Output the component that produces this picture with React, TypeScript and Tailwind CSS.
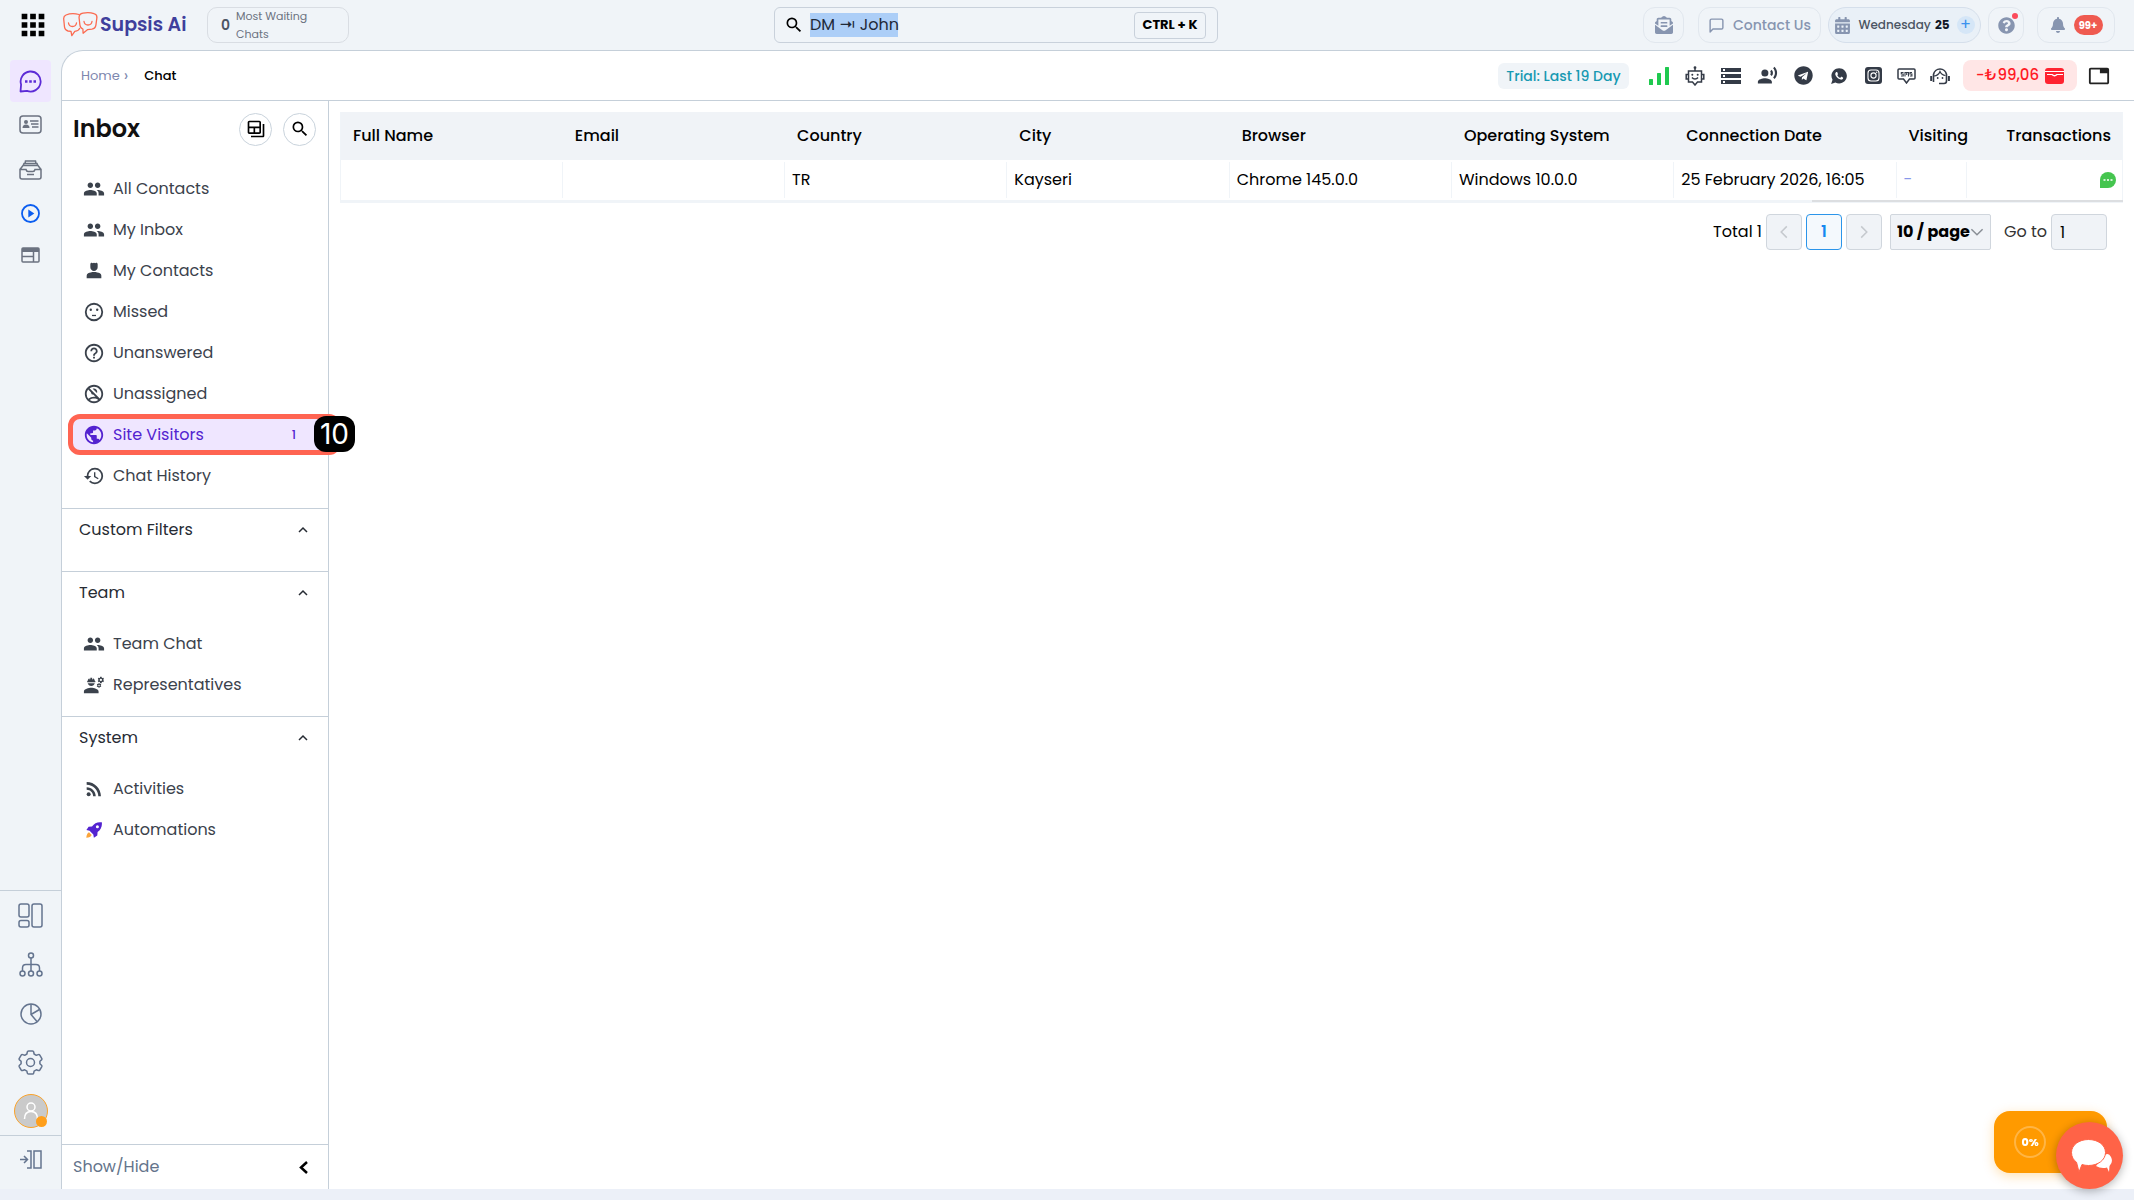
import { FaBell, FaCalendarAlt, FaEnvelopeOpenText, FaQuestionCircle, FaTelegram } from "react-icons/fa"
import { FiMessageSquare } from "react-icons/fi"
import { IoLogoWhatsapp } from "react-icons/io"
import {
  MdApps,
  MdEngineering,
  MdGroup,
  MdHelpOutline,
  MdHistory,
  MdOutlineBackupTable,
  MdOutlineNoAccounts,
  MdPerson4,
  MdPublic,
  MdRecordVoiceOver,
  MdRssFeed,
  MdSearch,
  MdStorage,
  MdTab,
} from "react-icons/md"

const INBOX = [
  { name: "All Contacts", icon: <MdGroup size={22} /> },
  { name: "My Inbox", icon: <MdGroup size={22} /> },
  { name: "My Contacts", icon: <MdPerson4 size={22} /> },
  { name: "Missed", icon: <MissedIcon /> },
  { name: "Unanswered", icon: <MdHelpOutline size={22} /> },
  { name: "Unassigned", icon: <MdOutlineNoAccounts size={22} /> },
  { name: "Site Visitors", icon: <MdPublic size={22} />, count: 1, active: true },
  { name: "Chat History", icon: <MdHistory size={22} /> },
]

const SECTIONS = [
  { title: "Custom Filters", items: [] },
  {
    title: "Team",
    items: [
      { name: "Team Chat", icon: <MdGroup size={22} /> },
      { name: "Representatives", icon: <MdEngineering size={22} /> },
    ],
  },
  {
    title: "System",
    items: [
      { name: "Activities", icon: <MdRssFeed size={22} /> },
      { name: "Automations", icon: <RocketIcon /> },
    ],
  },
]

const COLUMNS = ["Full Name", "Email", "Country", "City", "Browser", "Operating System", "Connection Date"]
const VISITOR = ["", "", "TR", "Kayseri", "Chrome 145.0.0", "Windows 10.0.0", "25 February 2026, 16:05"]

const CHANNELS = [
  { name: "Signal", icon: <SignalIcon />, width: "w-9" },
  { name: "Bot", icon: <BotIcon />, width: "w-9" },
  { name: "Queue", icon: <MdStorage size={24} />, width: "w-9" },
  { name: "Voice", icon: <MdRecordVoiceOver size={21} />, width: "w-9" },
  { name: "Telegram", icon: <FaTelegram size={19} />, width: "w-9" },
  { name: "WhatsApp", icon: <IoLogoWhatsapp size={18} />, width: "w-9" },
  { name: "Instagram", icon: <InstagramIcon />, width: "w-[33px]" },
  { name: "SMS", icon: <SmsIcon />, width: "w-[33px]" },
  { name: "Support", icon: <SupportIcon />, width: "w-[33px]" },
]

function MissedIcon() {
  return (
    <svg width="22" height="22" viewBox="0 0 24 24" fill="none" stroke="currentColor" strokeWidth="2">
      <circle cx="12" cy="12" r="9" />
      <path d="M9.8 15.8h4.4" strokeWidth="1.4" />
      <circle cx="8.5" cy="9.5" r="1.3" fill="currentColor" stroke="none" />
      <circle cx="15.5" cy="9.5" r="1.3" fill="currentColor" stroke="none" />
    </svg>
  )
}

function RocketIcon() {
  return (
    <svg width="16" height="16" viewBox="0 0 16 16">
      <path d="M15.8.3C11.6-.4 8.4 1.2 6 4.400L2.600 4.700.4 8.100l3.200.6 3.700 3.700.6 3.400 3.400-2.300.3-3.500C14.800 7.600 16.400 4.400 15.800.3Z" fill="#5323d0" />
      <circle cx="11.4" cy="4.7" r="1.5" fill="#fff" />
      <path d="M3 10.200c-1.600.5-2.500 2.700-2.700 5.500 2.800-.2 4.900-1 5.400-2.700Z" fill="#fba53b" />
    </svg>
  )
}

function SignalIcon() {
  return (
    <svg width="20" height="18" viewBox="0 0 20 18" fill="#1fc94f">
      <rect y="12" width="4" height="6" rx=".5" />
      <rect x="8" y="6" width="4" height="12" rx=".5" />
      <rect x="16" width="4" height="18" rx=".5" />
    </svg>
  )
}

function BotIcon() {
  return (
    <svg width="20" height="20" viewBox="0 0 20 20" fill="none" stroke="currentColor" strokeWidth="1.5">
      <path d="M10 5V2.500M3.500 5h13v11h-4L10 19l-2.500-3h-4ZM3.500 8.500H1.200V13h2.300M16.500 8.500h2.300V13h-2.300M7 11.500c1.500 2 4.500 2 6 0" />
      <circle cx="10" cy="1.7" r="1.4" fill="currentColor" stroke="none" />
      <circle cx="7.3" cy="8.7" r="1" fill="currentColor" stroke="none" />
      <circle cx="12.7" cy="8.7" r="1" fill="currentColor" stroke="none" />
    </svg>
  )
}

function InstagramIcon() {
  return (
    <svg width="17" height="17" viewBox="0 0 17 17">
      <rect width="17" height="17" rx="3" fill="currentColor" />
      <rect x="3" y="3" width="11" height="11" rx="3" fill="none" stroke="#fff" strokeWidth="1.1" />
      <circle cx="8.5" cy="8.5" r="2.6" fill="none" stroke="#fff" strokeWidth="1.1" />
      <circle cx="11.7" cy="5.3" r=".7" fill="#fff" />
    </svg>
  )
}

function SmsIcon() {
  return (
    <svg width="19" height="16" viewBox="0 0 19 16" fill="none" stroke="currentColor" strokeWidth="1.5">
      <path d="M2 1h15q1 0 1 1v8q0 1-1 1h-4.500L9.500 15l-3-4H2q-1 0-1-1V2q0-1 1-1Z" />
      <path d="M6.500 4.500H4.300v1.500h1.900v2H4M8 8.500v-4h3.500v4M9.700 4.500V7M15 4.500h-2v1.500h1.900v2H13" strokeWidth="1.1" />
    </svg>
  )
}

function SupportIcon() {
  return (
    <svg width="20" height="19" viewBox="0 0 20 19" fill="none" stroke="currentColor" strokeWidth="1.6">
      <path d="M3.500 16V8.500a6.600 6.600 0 0 1 13 0V15q0 2.500-2.500 2.500H9" />
      <path d="M1.200 10v5M18.900 10v5" strokeWidth="2" />
      <path d="M4 10q4.500-.5 6-4.500 1.500 3.500 5.500 4" strokeWidth="1.2" />
      <circle cx="7.7" cy="12" r=".9" fill="currentColor" stroke="none" />
      <circle cx="12.5" cy="12" r=".9" fill="currentColor" stroke="none" />
    </svg>
  )
}

function Logo() {
  return (
    <svg width="35" height="26" viewBox="0 0 35 26" fill="none" stroke="#fb6a50" strokeWidth="1.3" strokeLinejoin="round" strokeLinecap="round">
      <path d="M16 2.500Q9 .5 3 3q-2.500 1-2.300 4l.8 8q.5 3.500 3.500 4l3 .4.800 4.200 3-4.200q4-.5 4.800-3" />
      <path d="M20 1.200q6-1.200 11 .5 3.200 1 2.900 4l-1 7.500q-.5 3.500-4 4l-4.500.5-4.300 3.500-.2-4.200q-2.500-.8-3-4l-.8-7Q15.700 2 20 1.200Z" />
      <path d="M5.500 11q.5 3.500 4 3.500t4-3.500M21 9.500q.5 3.500 4 3.500t4-3.500" />
    </svg>
  )
}

function ChatIcon() {
  return (
    <svg width="23" height="23" viewBox="0 0 23 23" fill="none" stroke="currentColor" strokeWidth="1.8" strokeLinejoin="round">
      <path d="M1.500 21.500l.6-7A10 10 0 1 1 8 20.800Z" />
      <path d="M6 11.500h2.500M10.200 11.500h2.600M14.500 11.500H17" strokeWidth="2.4" />
    </svg>
  )
}

function ContactCardIcon() {
  return (
    <svg width="23" height="19" viewBox="0 0 23 19" fill="none" stroke="currentColor" strokeWidth="1.5">
      <rect x="1" y="1" width="21" height="17" rx="3" />
      <circle cx="7" cy="7" r="2" fill="currentColor" stroke="none" />
      <path d="M3.500 13q0-3.500 3.500-3.500t3.500 3.500Z" fill="currentColor" stroke="none" />
      <path d="M11 6h8.500M12 9h7.500M13 12h6.500" />
    </svg>
  )
}

function ArchiveIcon() {
  return (
    <svg width="23" height="20" viewBox="0 0 23 20" fill="none" stroke="currentColor" strokeWidth="1.5">
      <path d="M1 9.500 4 5.500h15l3 4M4 6l1-2.500h13L19 6M6 3.500 6.500 1h10l.5 2.500M1 9.500h6q.5 2 2 2h5q1.500 0 2-2h6V17q0 2-2 2H3q-2 0-2-2ZM8 14.500h7" />
    </svg>
  )
}

function PlayIcon() {
  return (
    <svg width="19" height="19" viewBox="0 0 19 19">
      <circle cx="9.5" cy="9.5" r="8.5" fill="none" stroke="currentColor" strokeWidth="1.8" />
      <path d="m7.300 5.500 6 4-6 4Z" fill="currentColor" />
    </svg>
  )
}

function LayoutIcon() {
  return (
    <svg width="19" height="16" viewBox="0 0 19 16" fill="none" stroke="currentColor" strokeWidth="1.5">
      <rect x="1" y="1" width="17" height="14" rx="1" />
      <path d="M1 3h17" strokeWidth="4" />
      <path d="M1 9.500h11M12.500 5v10" />
    </svg>
  )
}

function PanelsIcon() {
  return (
    <svg width="25" height="25" viewBox="0 0 25 25" fill="none" stroke="currentColor" strokeWidth="1.5">
      <rect x="1" y="1" width="10" height="13" rx="2" />
      <rect x="1" y="17.5" width="10" height="6.5" rx="2" />
      <rect x="14" y="1" width="10" height="23" rx="2" />
    </svg>
  )
}

function TreeIcon() {
  return (
    <svg width="24" height="25" viewBox="0 0 24 25" fill="none" stroke="currentColor" strokeWidth="1.5">
      <circle cx="12" cy="3.5" r="2.5" />
      <circle cx="3.5" cy="21.5" r="2.5" />
      <circle cx="12" cy="21.5" r="2.5" />
      <circle cx="20.5" cy="21.5" r="2.5" />
      <path d="M12 6v13M3.500 19v-3q0-3.500 3.500-3.500h10q3.500 0 3.500 3.500v3" />
    </svg>
  )
}

function PieIcon() {
  return (
    <svg width="22" height="22" viewBox="0 0 22 22" fill="none" stroke="currentColor" strokeWidth="1.5">
      <circle cx="11" cy="11" r="10" />
      <path d="M11 1v10.500l6 7M11 11.500l8.500-5" />
    </svg>
  )
}

function GearIcon() {
  return (
    <svg width="25" height="25" viewBox="0 0 25 25" fill="none" stroke="currentColor" strokeWidth="1.5" strokeLinejoin="round">
      <path d="M10.500 1h4q1 0 1.200 1l.4 2 2.200 1.300 2-.7q1-.3 1.500.5l1.900 3.200q.5.900-.2 1.600l-1.600 1.400v2.500l1.600 1.400q.7.700.2 1.600l-1.900 3.200q-.5.800-1.500.5l-2-.7-2.200 1.300-.4 2q-.2.900-1.200.9h-4q-1 0-1.200-.9l-.4-2-2.200-1.300-2 .7q-1 .3-1.500-.5l-1.900-3.200q-.5-.9.2-1.600l1.600-1.400v-2.500L1.500 9.900q-.7-.7-.2-1.600l1.900-3.200q.5-.8 1.500-.5l2 .7L8.900 4l.4-2q.2-1 1.200-1Z" />
      <circle cx="12.5" cy="12.5" r="4" />
    </svg>
  )
}

function ExpandIcon() {
  return (
    <svg width="22" height="19" viewBox="0 0 22 19" fill="none" stroke="currentColor" strokeWidth="1.5">
      <path d="M0 9.500h7M4 6l3.500 3.500L4 13M7 1h4v17H7" />
      <rect x="14" y="1" width="7" height="17" />
    </svg>
  )
}

function Chevron({ dir, size = 10 }: { dir: "up" | "left" | "right" | "down"; size?: number }) {
  const paths = { up: "m1 7 4-4 4 4", down: "m1 3 4 4 4-4", left: "M7 1 3 5l4 4", right: "m3 1 4 4-4 4" }
  return (
    <svg width={size} height={size} viewBox="0 0 10 10" fill="none" stroke="currentColor" strokeWidth={15 / size}>
      <path d={paths[dir]} />
    </svg>
  )
}

type Item = { name: string; icon: React.ReactNode; count?: number; active?: boolean }

function NavItem({ item }: { item: Item }) {
  return (
    <li className="relative">
      <a
        href="#"
        className={`flex h-[41px] items-center pl-[21px] pr-[26px] ${item.active ? "text-[#5323d0]" : "text-[#3b424c]"}`}
      >
        {/* Callout around the selected row */}
        {item.active && (
          <span className="absolute inset-y-0 left-[6px] -right-[13px] rounded-xl border-[5px] border-[#ff6452] bg-[#efe6ff]" />
        )}
        <span className="relative flex w-[22px] shrink-0 justify-center">{item.icon}</span>
        <span className="relative ml-2 flex-1">{item.name}</span>
        {item.count && <span className="relative mr-[6px] text-xs font-medium">{item.count}</span>}
      </a>
      {item.active && (
        <span className="absolute top-[2px] -right-[27px] z-10 flex h-9 w-[41px] items-center justify-center rounded-xl bg-black font-['Inter',sans-serif] text-[28px] text-white">
          10
        </span>
      )}
    </li>
  )
}

function Header() {
  return (
    <header className="flex h-[50px] shrink-0 items-center justify-between">
      <div className="flex items-center">
        <button aria-label="Apps" className="ml-4 text-black">
          <MdApps size={34} />
        </button>
        <a href="#" className="ml-[13px] flex w-[132px] items-center gap-[2px] text-[19px] font-semibold text-[#3f3f9c]">
          <Logo />
          Supsis Ai
        </a>
        <div className="ml-3 flex h-9 w-[142px] items-center gap-[6px] rounded-[10px] border border-[#d9dde3] pl-[13px]">
          <strong className="text-sm font-semibold text-[#4b5563]">0</strong>
          <span className="w-20 text-[11px] leading-[18px] text-[#6b7280]">Most Waiting Chats</span>
        </div>
      </div>

      <div className="flex h-9 w-[444px] items-center rounded-md border border-[#c9d1db] pl-[9px] pr-[11px]">
        <MdSearch size={20} className="text-black" />
        <div className="relative ml-[6px] flex-1">
          <span className="absolute top-0 left-0 h-6 w-[88px] bg-[#accef7]" />
          <input
            aria-label="Search"
            defaultValue="DM ⇥ John"
            className="relative block h-6 w-full bg-transparent text-[#1f2937] outline-none"
          />
        </div>
        <kbd className="flex h-[27px] w-[72px] items-center justify-center rounded border border-[#c9d1db] font-['Poppins','Inter',sans-serif] text-[13px] font-bold text-black">
          CTRL + K
        </kbd>
      </div>

      <div className="flex items-center pr-[19px] text-[#8795b0]">
        <button aria-label="Mail" className="flex h-9 w-[41px] items-center justify-center rounded-xl border border-[#e1e7ee]">
          <FaEnvelopeOpenText size={18} />
        </button>
        <button className="ml-[14px] flex h-9 w-[123px] items-center justify-center gap-2 rounded-xl border border-[#e1e7ee] text-sm font-medium">
          <FiMessageSquare size={17} />
          Contact Us
        </button>
        <button className="ml-[7px] flex h-9 w-[153px] items-center justify-center gap-[7px] rounded-full border border-[#d5dfeb] bg-[#e9f0f7] text-xs font-medium text-[#4b5563]">
          <FaCalendarAlt size={17} className="text-[#8795b0]" />
          <span>
            Wednesday <b className="ml-px text-[#111827]">25</b>
          </span>
          <span className="flex size-[18px] items-center justify-center rounded-full bg-[#d5e6f7] text-base font-normal text-[#3b92ee]">+</span>
        </button>
        <button aria-label="Help" className="relative ml-[7px] flex h-9 w-9 items-center justify-center rounded-xl border border-[#e1e7ee]">
          <FaQuestionCircle size={17} />
          <span className="absolute top-[5px] right-[5px] size-[6px] rounded-full bg-[#fb4b5b]" />
        </button>
        <button aria-label="Notifications" className="ml-[13px] flex h-9 w-[78px] items-center justify-center gap-2 rounded-xl border border-[#e1e7ee]">
          <FaBell size={16} />
          <span className="flex h-5 w-[29px] items-center justify-center rounded-full bg-[#ef5a50] text-[10px] font-bold text-white">99+</span>
        </button>
      </div>
    </header>
  )
}

function Rail() {
  return (
    <nav className="flex w-[61px] shrink-0 flex-col items-center pt-[10px] text-[#6b7280]">
      <a href="#" aria-label="Chat" className="flex h-[42px] w-[41px] items-center justify-center rounded bg-[#efe6ff] text-[#5c2bd6]">
        <ChatIcon />
      </a>
      <a href="#" aria-label="Contacts" className="flex h-[45px] items-center"><ContactCardIcon /></a>
      <a href="#" aria-label="Archive" className="flex h-[45px] items-center"><ArchiveIcon /></a>
      <a href="#" aria-label="Play" className="flex h-[42px] items-center text-[#0b5df0]"><PlayIcon /></a>
      <a href="#" aria-label="Pages" className="flex h-[42px] items-center"><LayoutIcon /></a>
      <div className="mt-auto flex w-full flex-col items-center border-t border-[#c5cfd9] text-[#64748f]">
        <a href="#" aria-label="Boards" className="flex h-[49px] items-center"><PanelsIcon /></a>
        <a href="#" aria-label="Organisation" className="flex h-[49px] items-center"><TreeIcon /></a>
        <a href="#" aria-label="Reports" className="flex h-[49px] items-center"><PieIcon /></a>
        <a href="#" aria-label="Settings" className="flex h-[49px] items-center"><GearIcon /></a>
        <button aria-label="Profile" className="relative my-[7px] flex size-[34px] items-center justify-center rounded-full border border-[#fba32a] bg-[#cacaca] text-white">
          <svg width="16" height="18" viewBox="0 0 16 18" fill="none" stroke="currentColor" strokeWidth="1.5">
            <circle cx="8" cy="5" r="4" />
            <path d="M1.500 17q0-7.500 6.500-7.500t6.500 7.500" />
          </svg>
          <span className="absolute right-0 bottom-0 size-[11px] rounded-full bg-[#ff9f1c]" />
        </button>
      </div>
      <button aria-label="Expand" className="flex h-[54px] w-full items-center justify-center border-t border-[#c5cfd9] pb-[6px] text-[#64748f]">
        <ExpandIcon />
      </button>
    </nav>
  )
}

function Sidebar() {
  return (
    <aside className="flex w-[267px] shrink-0 flex-col border-r border-[#c5cfd9]">
      <div className="flex h-[56px] items-center gap-[11px] pl-[11px] pr-3">
        <h1 className="flex-1 text-2xl font-semibold text-[#111]">Inbox</h1>
        <button aria-label="Views" className="flex size-[33px] items-center justify-center rounded-full border border-[#c9d3dc]">
          <MdOutlineBackupTable size={20} />
        </button>
        <button aria-label="Search inbox" className="flex size-[33px] items-center justify-center rounded-full border border-[#c9d3dc]">
          <MdSearch size={20} />
        </button>
      </div>
      <ul className="pt-[11px] pb-3">
        {INBOX.map((i) => (
          <NavItem key={i.name} item={i} />
        ))}
      </ul>
      {SECTIONS.map((s) => (
        <section key={s.title} className="border-t border-[#c5cfd9] pb-[11px]">
          <button className="flex h-[41px] w-full items-center justify-between pl-[17px] pr-5 text-[#262b33]">
            {s.title}
            <Chevron dir="up" />
          </button>
          <ul className="pt-[10px]">
            {s.items.map((i) => (
              <NavItem key={i.name} item={i} />
            ))}
          </ul>
        </section>
      ))}
      <button className="mt-auto flex h-[45px] items-center justify-between border-t border-[#c5cfd9] pl-[11px] pr-5 text-[#64748b]">
        Show/Hide
        <svg width="9" height="13" viewBox="0 0 9 13" fill="none" stroke="#000" strokeWidth="2.5">
          <path d="M8 1 2 6.500 8 12" />
        </svg>
      </button>
    </aside>
  )
}

function Visitors() {
  return (
    <main className="min-w-0 flex-1 pt-[11px] pr-[11px] pl-[11px] text-black">
      <table className="w-full table-fixed border-x border-[#f0f4f8]">
        <thead>
          <tr className="h-12 bg-[#f0f3f7] text-left whitespace-nowrap">
            {COLUMNS.map((c) => (
              <th key={c} className="pl-3 font-medium">{c}</th>
            ))}
            <th className="w-[70px] pl-3 font-medium">Visiting</th>
            <th className="w-[156px] pr-[11px] text-right font-medium">Transactions</th>
          </tr>
        </thead>
        <tbody>
          <tr className="h-10">
            {VISITOR.map((v, i) => (
              <td key={i} className="py-[2px] whitespace-nowrap">
                <div className="flex h-9 items-center border-r border-[#f0f4f8] pl-[7px]">{v}</div>
              </td>
            ))}
            <td className="py-[2px]">
              <div className="flex h-9 items-center border-r border-[#f0f4f8] pl-[7px] text-[#8797ea]">-</div>
            </td>
            <td className="pr-[6px]">
              <button aria-label="Open chat" className="ml-auto block">
                <svg width="16" height="16" viewBox="0 0 16 16">
                  <path d="M0 16V8a8 8 0 1 1 8 8Z" fill="#45c54f" />
                  <path d="M3.500 8h2M7 8h2M10.500 8h2" stroke="#fff" strokeWidth="1.6" />
                </svg>
              </button>
            </td>
          </tr>
        </tbody>
      </table>
      <div className="h-[3px] bg-[#f0f4f8]">
        <div className="ml-auto h-[2px] w-[311px] bg-[#dcdee1]" />
      </div>

      <div className="mt-[11px] flex items-center justify-end gap-1 pr-4">
        <span>Total 1</span>
        <button aria-label="Previous page" className="flex size-9 items-center justify-center rounded border border-[#d0d6dd] bg-[#f0f3f7] text-[#c5c9ce]">
          <Chevron dir="left" size={14} />
        </button>
        <button className="flex size-9 items-center justify-center rounded border border-[#2b95ea] bg-[#f4f9fd] font-semibold text-[#1688f0]">1</button>
        <button aria-label="Next page" className="flex size-9 items-center justify-center rounded border border-[#d0d6dd] bg-[#f0f3f7] text-[#c5c9ce]">
          <Chevron dir="right" size={14} />
        </button>
        <span className="relative ml-1 flex items-center">
          <select aria-label="Page size" className="h-9 w-[101px] appearance-none rounded-[2px] border border-[#d0d6dd] bg-[#f0f3f7] pl-[6px] font-bold">
            <option>10 / page</option>
          </select>
          <span className="pointer-events-none absolute right-[7px] text-[#8a8f96]">
            <Chevron dir="down" size={14} />
          </span>
        </span>
        <label className="ml-[9px] flex items-center gap-1 text-[#333]">
          Go to
          <input defaultValue="1" className="h-9 w-14 rounded border border-[#d0d6dd] bg-[#f0f3f7] pl-2 text-black" />
        </label>
      </div>
    </main>
  )
}

export default function App() {
  return (
    <div className="flex h-screen flex-col overflow-hidden bg-[#f0f4f8] font-['Poppins','Inter',sans-serif] text-base">
      <Header />
      <div className="flex min-h-0 flex-1">
        <Rail />
        <div className="flex min-w-0 flex-1 flex-col rounded-tl-[22px] border-t border-l border-[#c5cfd9] bg-white">
          <div className="flex h-[50px] shrink-0 items-center justify-between border-b border-[#c5cfd9] pl-[19px] pr-6">
            <nav aria-label="Breadcrumb" className="flex items-center text-[13px]">
              <a href="#" className="flex items-center gap-1 text-[#7d87ae]">
                Home <span className="text-base">›</span>
              </a>
              <span className="ml-4 font-medium text-black">Chat</span>
            </nav>
            <div className="flex items-center text-[#343b47]">
              <span className="mr-3 flex h-[26px] w-[131px] items-center justify-center rounded-md bg-[#f0f4f8] text-sm font-medium text-[#1799b2]">
                Trial: Last 19 Day
              </span>
              {CHANNELS.map((c) => (
                <button key={c.name} aria-label={c.name} className={`flex items-center justify-center ${c.width}`}>
                  {c.icon}
                </button>
              ))}
              <a href="#" className="ml-[7px] flex h-[31px] w-[114px] items-center justify-center gap-[6px] rounded-lg bg-[#ffe6e6] text-[15px] font-medium text-[#ff1a25]">
                −₺99,06
                <svg width="19" height="16" viewBox="0 0 19 16">
                  <rect width="19" height="16" rx="3" fill="#ff2330" />
                  <path d="M0 3.500h19M2 6.500h5q2.500 2.500 5 0h6" fill="none" stroke="#fff" strokeWidth="1.2" />
                </svg>
              </a>
              <button aria-label="Tabs" className="ml-[11px] text-[#222]">
                <MdTab size={22} />
              </button>
            </div>
          </div>
          <div className="flex min-h-0 flex-1">
            <Sidebar />
            <Visitors />
          </div>
        </div>
      </div>
      <footer className="h-[11px] shrink-0 bg-[#ecf0f8]" />

      {/* Floating setup progress and chat launcher */}
      <div className="fixed right-[27px] bottom-[27px] flex h-[62px] w-[113px] items-center rounded-2xl bg-[#ff9a00] pl-5 shadow-[0_3px_12px_rgba(255,154,0,0.3)]">
        <span className="flex size-8 items-center justify-center rounded-full border-2 border-[#ffb545] text-[11px] font-extrabold text-white">0%</span>
      </div>
      <button aria-label="Open support chat" className="fixed right-[11px] bottom-[11px] flex size-[67px] items-center justify-center rounded-full bg-[#ff6347] pl-1 shadow-[0_2px_10px_rgba(0,0,0,0.3)]">
        <svg width="42" height="34" viewBox="0 0 42 34" fill="#fff">
          <path d="M25 27q5 3 11 1.500l2 4.500.5-6q4-4 1.500-9T34 16Z" />
          <path d="M17.500.5C8 .5.500 6 .5 13.500c0 4.500 2 7.500 5 9.700L8 33l3-7.500c2 .6 4 1 6.500 1 9.500 0 17-5.500 17-13S27 .5 17.500.5Z" stroke="#ff6347" />
        </svg>
      </button>
    </div>
  )
}
